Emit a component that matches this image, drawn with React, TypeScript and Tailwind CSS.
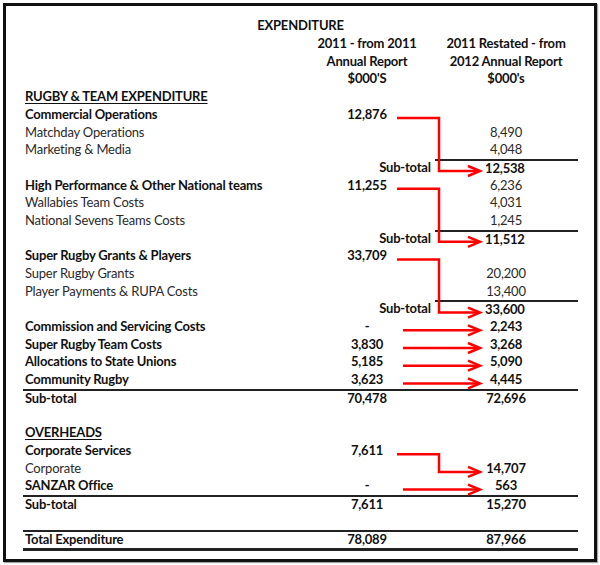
import React from "react";

type Row = {
  label?: string;
  lb?: boolean;
  u?: boolean;
  c1?: string;
  c1b?: boolean;
  c2?: string;
  c2b?: boolean;
  sub?: boolean;
  secSub?: boolean;
  total?: boolean;
};

const rows: Row[] = [
  { label: "RUGBY & TEAM EXPENDITURE", lb: true, u: true },
  { label: "Commercial Operations", lb: true, c1: "12,876", c1b: true },
  { label: "Matchday Operations", c2: "8,490" },
  { label: "Marketing & Media", c2: "4,048" },
  { sub: true, c2: "12,538", c2b: true },
  { label: "High Performance & Other National teams", lb: true, c1: "11,255", c1b: true, c2: "6,236" },
  { label: "Wallabies Team Costs", c2: "4,031" },
  { label: "National Sevens Teams Costs", c2: "1,245" },
  { sub: true, c2: "11,512", c2b: true },
  { label: "Super Rugby Grants & Players", lb: true, c1: "33,709", c1b: true },
  { label: "Super Rugby Grants", c2: "20,200" },
  { label: "Player Payments & RUPA Costs", c2: "13,400" },
  { sub: true, c2: "33,600", c2b: true },
  { label: "Commission and Servicing Costs", lb: true, c1: "-", c1b: true, c2: "2,243", c2b: true },
  { label: "Super Rugby Team Costs", lb: true, c1: "3,830", c1b: true, c2: "3,268", c2b: true },
  { label: "Allocations to State Unions", lb: true, c1: "5,185", c1b: true, c2: "5,090", c2b: true },
  { label: "Community Rugby", lb: true, c1: "3,623", c1b: true, c2: "4,445", c2b: true },
  { label: "Sub-total", lb: true, c1: "70,478", c1b: true, c2: "72,696", c2b: true, secSub: true },
  {},
  { label: "OVERHEADS", lb: true, u: true },
  { label: "Corporate Services", lb: true, c1: "7,611", c1b: true },
  { label: "Corporate", c2: "14,707", c2b: true },
  { label: "SANZAR Office", lb: true, c1: "-", c1b: true, c2: "563", c2b: true },
  { label: "Sub-total", lb: true, c1: "7,611", c1b: true, c2: "15,270", c2b: true, secSub: true },
  {},
  { label: "Total Expenditure", lb: true, c1: "78,089", c1b: true, c2: "87,966", c2b: true, total: true },
];

const FONT = "font-['Lato','Liberation_Sans',sans-serif]";

const cy = (i: number) => 26.4 + 17.7 * i;

function Elbow({ from, to }: { from: number; to: number }) {
  const y1 = cy(from);
  const y2 = cy(to);
  return (
    <g>
      <polyline points={`397,${y1} 439,${y1} 439,${y2} 479,${y2}`} fill="none" stroke="#ff0000" strokeWidth={2.5} />
      <polyline points={`468,${y2 - 5} 480,${y2} 468,${y2 + 5}`} fill="none" stroke="#ff0000" strokeWidth={2.5} />
    </g>
  );
}

function Straight({ row }: { row: number }) {
  const y = cy(row);
  return (
    <g>
      <line x1={403} y1={y} x2={479} y2={y} stroke="#ff0000" strokeWidth={2.5} />
      <polyline points={`468,${y - 5} 480,${y} 468,${y + 5}`} fill="none" stroke="#ff0000" strokeWidth={2.5} />
    </g>
  );
}

export default function App() {
  return (
    <div className={`relative w-[600px] h-[565px] bg-white ${FONT} text-[13px] tracking-[-0.2px] text-[#111]`}>
      <div className="ml-[3px] mt-[3px] w-[594px] h-[559px] border-[3px] border-[#111] shadow-[1px_1px_1px_rgba(0,0,0,0.35)] pt-[11.3px] pl-[17px]">
        <div className="w-[555px]">
          <div className="h-[17.7px] flex items-center justify-center font-bold">EXPENDITURE</div>
          {["2011 - from 2011|2011 Restated - from", "Annual Report|2012 Annual Report", "$000'S|$000's"].map((h) => {
            const [a, b] = h.split("|");
            return (
              <div key={h} className="h-[17.7px] flex items-center font-bold">
                <div className="w-[277px]" />
                <div className="w-[134px] text-center">{a}</div>
                <div className="w-[144px] text-center">{b}</div>
              </div>
            );
          })}
          {rows.map((r, i) => {
            const base = r.total
              ? "h-[20.7px] border-t-2 border-b-[3px] border-[#222]"
              : r.secSub
              ? "h-[17.7px] border-t-2 border-[#222]"
              : "h-[17.7px]";
            return (
              <div key={i} className={`flex items-stretch ${base}`}>
                <div className={`w-[277px] pl-[2px] flex items-center ${r.lb ? "font-bold" : "text-[#2a2a2a]"} ${r.u ? "underline underline-offset-2" : ""}`}>
                  {r.label}
                </div>
                <div className={`w-[134px] flex items-center ${r.sub ? "justify-end font-bold pr-[1px]" : "justify-center"} ${r.c1b ? "font-bold" : ""}`}>
                  {r.sub ? "Sub-total" : r.c1}
                </div>
                <div className={`w-[144px] flex items-center justify-center ${r.sub ? "border-t-2 border-[#222] ml-[3px]" : ""} ${r.c2b ? "font-bold" : "text-[#2a2a2a]"}`}>
                  <span className={r.sub ? "-ml-[3px]" : ""}>{r.c2}</span>
                </div>
              </div>
            );
          })}
        </div>
      </div>
      <svg className="absolute inset-0 pointer-events-none" width={600} height={565} viewBox="0 0 600 565">
        <Elbow from={5} to={8} />
        <Elbow from={9} to={12} />
        <Elbow from={13} to={16} />
        <Straight row={17} />
        <Straight row={18} />
        <Straight row={19} />
        <Straight row={20} />
        <Elbow from={24} to={25} />
        <Straight row={26} />
      </svg>
    </div>
  );
}
